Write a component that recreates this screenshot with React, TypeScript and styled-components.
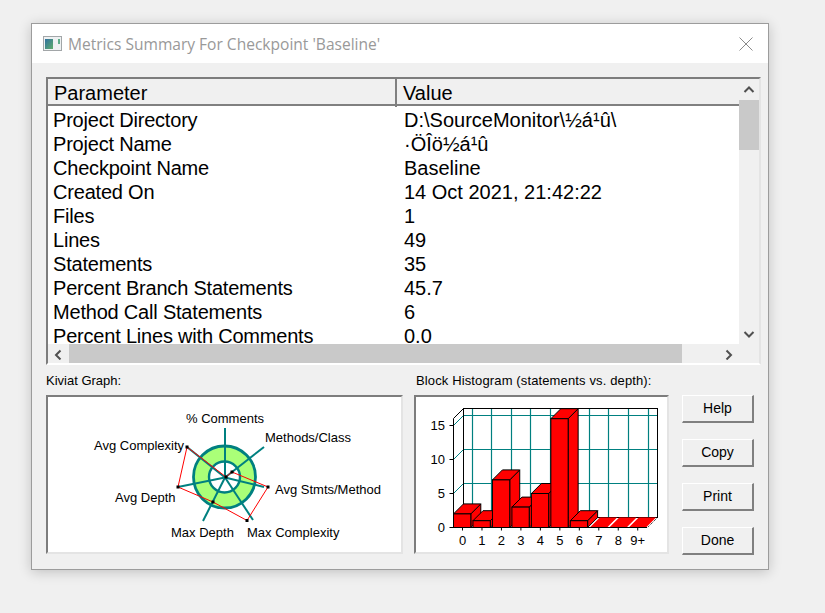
import React from "react";
import styled, { createGlobalStyle } from "styled-components";

const Global = createGlobalStyle`
  html, body { margin: 0; padding: 0; background: #f0f0f0; }
  #root { width: 825px; height: 613px; overflow: hidden; }
`;

const Page = styled.div`
  padding: 23px 0 0 31px;
  font-family: "Liberation Sans", Arial, sans-serif;
  color: #000;
`;

const Win = styled.div`
  width: 738px;
  height: 547px;
  box-sizing: border-box;
  border: 1px solid #9c9c9c;
  background: #f0f0f0;
  box-shadow: 0 2px 12px rgba(0, 0, 0, 0.2);
  display: flex;
  flex-direction: column;
`;

const TitleBar = styled.div`
  height: 39px;
  background: #fff;
  display: flex;
  align-items: center;
  padding: 0 15px 0 11px;
  gap: 6px;
`;

const TitleText = styled.div`
  flex: 1;
  font-family: "Open Sans", "Noto Sans", sans-serif;
  font-size: 15.55px;
  color: #999;
  white-space: nowrap;
`;

const Body = styled.div`
  flex: 1;
  padding: 14px 0 0 14px;
  display: flex;
  flex-direction: column;
`;

const ListBox = styled.div`
  width: 715px;
  height: 288px;
  box-sizing: border-box;
  border-top: 2px solid #7d7d7d;
  border-left: 2px solid #7d7d7d;
  border-right: 2px solid #e4e4e4;
  border-bottom: 2px solid #fff;
  background: #fff;
  display: grid;
  grid-template-columns: 1fr 20px;
  grid-template-rows: 1fr 19px;
`;

const ListMain = styled.div`
  overflow: hidden;
  min-width: 0;
`;

const HeaderRow = styled.div`
  display: grid;
  grid-template-columns: 349px 1fr;
  height: 27px;
  box-sizing: border-box;
  background: #f0f0f0;
  border-bottom: 2px solid #808080;
`;

const HeaderCell = styled.div<{ $divider?: boolean }>`
  font-size: 20px;
  line-height: 28px;
  padding-left: 6px;
  box-sizing: border-box;
  border-right: ${(p) => (p.$divider ? "2px solid #808080" : "none")};
`;

const Row = styled.div`
  display: grid;
  grid-template-columns: 348px 1fr;
  height: 24px;
  font-size: 20px;
  line-height: 24px;
  white-space: nowrap;
`;

const RowsWrap = styled.div`
  padding-top: 2px;
`;

const CellName = styled.div`
  padding-left: 5px;
  letter-spacing: -0.2px;
`;

const CellValue = styled.div`
  padding-left: 8px;
`;

const VScroll = styled.div`
  background: #f0f0f0;
  display: flex;
  flex-direction: column;
  align-items: stretch;
`;

const ScrollBtn = styled.div<{ $w?: number; $h?: number }>`
  flex: none;
  width: ${(p) => (p.$w ? `${p.$w}px` : "auto")};
  height: ${(p) => (p.$h ? `${p.$h}px` : "auto")};
  display: flex;
  align-items: center;
  justify-content: center;
`;

const VThumb = styled.div`
  height: 50px;
  background: #c9c9c9;
`;

const ScrollSpacer = styled.div`
  flex: 1;
`;

const HScroll = styled.div`
  grid-column: 1 / 3;
  background: #f0f0f0;
  display: flex;
  align-items: stretch;
`;

const HThumb = styled.div`
  width: 613px;
  background: #c9c9c9;
`;

const Lower = styled.div`
  display: grid;
  grid-template-columns: 357px 255px 72px;
  column-gap: 11px;
  margin-top: 8px;
  grid-template-rows: 22px 160px;
`;

const ChartLabel = styled.div<{ $pad?: number; $tracking?: number }>`
  font-size: 13px;
  line-height: 16px;
  padding-left: ${(p) => p.$pad ?? 0}px;
  letter-spacing: ${(p) => p.$tracking ?? 0}px;
  white-space: nowrap;
  align-self: start;
`;

const ChartBox = styled.div`
  box-sizing: border-box;
  height: 159px;
  border-top: 2px solid #7d7d7d;
  border-left: 2px solid #7d7d7d;
  border-right: 2px solid #e4e4e4;
  border-bottom: 2px solid #e4e4e4;
  background: #fff;
  overflow: hidden;
  svg { display: block; }
`;

const ButtonCol = styled.div`
  display: flex;
  flex-direction: column;
  gap: 16px;
  margin-left: 2px;
`;

const LowerCell = styled.div``;

const Btn = styled.button`
  width: 72px;
  height: 28px;
  box-sizing: border-box;
  padding: 0 0 2px;
  background: #f0f0f0;
  border-top: 1px solid #fff;
  border-left: 1px solid #fff;
  border-right: 2px solid #808080;
  border-bottom: 2px solid #808080;
  font-family: "Liberation Sans", Arial, sans-serif;
  font-size: 14px;
  color: #000;
`;

const Chevron = ({ dir }: { dir: "up" | "down" | "left" | "right" }) => {
  const d = {
    up: "M1.5 7 L6 2.5 L10.5 7",
    down: "M1.5 3 L6 7.5 L10.5 3",
    left: "M7.5 1.5 L3 6 L7.5 10.5",
    right: "M3.5 1.5 L8 6 L3.5 10.5",
  }[dir];
  return (
    <svg width="12" height="12" viewBox="0 0 12 10" fill="none">
      <path d={d} stroke="#505050" strokeWidth="2" />
    </svg>
  );
};

const rows: [string, string][] = [
  ["Project Directory", "D:\\SourceMonitor\\½á¹û\\"],
  ["Project Name", "·ÖÎö½á¹û"],
  ["Checkpoint Name", "Baseline"],
  ["Created On", "14 Oct 2021, 21:42:22"],
  ["Files", "1"],
  ["Lines", "49"],
  ["Statements", "35"],
  ["Percent Branch Statements", "45.7"],
  ["Method Call Statements", "6"],
  ["Percent Lines with Comments", "0.0"],
];

const TEAL = "#008080";
const chartFont = { fontFamily: "'Liberation Sans', Arial, sans-serif", fontSize: 13 };

const Kiviat = () => {
  const c = [225, 477.5];
  const ends = [
    [225, 428],
    [264, 447],
    [264, 487],
    [253, 520],
    [203, 521],
    [178, 487],
    [187, 447],
  ];
  const poly = [
    [226, 477],
    [232, 472],
    [268, 487],
    [247, 520.5],
    [213, 502],
    [178, 487],
    [187, 447],
  ];
  const labels: [string, number, number][] = [
    ["% Comments", 186, 423],
    ["Methods/Class", 265, 442],
    ["Avg Complexity", 94, 450],
    ["Avg Stmts/Method", 275, 494],
    ["Avg Depth", 115, 502],
    ["Max Depth", 171, 537],
    ["Max Complexity", 247, 537],
  ];
  return (
    <svg width="353" height="155" viewBox="48 397 353 155">
      <circle cx={224.5} cy={477} r={31} fill="#aaff78" stroke={TEAL} strokeWidth="2.8" />
      <circle cx={224.5} cy={477} r={15.5} fill="#fff" stroke={TEAL} strokeWidth="2.4" />
      {ends.map((e, i) => (
        <line key={i} x1={c[0]} y1={c[1]} x2={e[0]} y2={e[1]} stroke={TEAL} strokeWidth="2" />
      ))}
      <polygon points={poly.map((p) => p.join(",")).join(" ")} fill="none" stroke="#ff0000" strokeWidth="1" />
      {poly.map((p, i) => (
        <rect key={i} x={p[0] - 1.5} y={p[1] - 1.5} width="3" height="3" fill="#000" />
      ))}
      {labels.map(([t, x, y]) => (
        <text key={t} x={x} y={y} {...chartFont} fill="#000">
          {t}
        </text>
      ))}
    </svg>
  );
};

const Histogram = () => {
  const values = [2, 1, 7, 3, 5, 16, 1, 0, 0, 0];
  const x0 = 453.5;
  const base = 527.5;
  const pitch = 19.47;
  const bw = 17.3;
  const unit = 6.8;
  const dx = 10;
  const dy = 10;
  const names = ["0", "1", "2", "3", "4", "5", "6", "7", "8", "9+"];
  const vgrid = [472.5, 491.5, 511.5, 530.5, 550.5, 569.5, 589.5, 608.5, 628.5, 648.5];
  return (
    <svg width="251" height="155" viewBox="416 397 251 155">
      {[415.5, 449.5, 483.5].map((y) => (
        <line key={y} x1={463.5} y1={y} x2={657.5} y2={y} stroke={TEAL} strokeWidth="1.2" />
      ))}
      {vgrid.map((x) => (
        <line key={x} x1={x} y1={408.5} x2={x} y2={517.5} stroke={TEAL} strokeWidth="1.2" />
      ))}
      {[425.5, 459.5, 493.5].map((y) => (
        <line key={y} x1={453.5} y1={y} x2={463.5} y2={y - 10} stroke={TEAL} strokeWidth="1" />
      ))}
      <rect x={463.5} y={408.5} width={194} height={109} fill="none" stroke="#000" strokeWidth="1" />
      <line x1={453.5} y1={418.5} x2={463.5} y2={408.5} stroke="#000" />
      <line x1={453.5} y1={418.5} x2={453.5} y2={base} stroke="#000" />
      <line x1={657.5} y1={517.5} x2={647.5} y2={base} stroke="#000" strokeDasharray="1 1" />
      {values.map((v, i) => {
        const x = x0 + i * pitch;
        const r = x + bw;
        const t = base - v * unit;
        if (v === 0) {
          return (
            <polygon
              key={i}
              points={`${x},${base} ${r},${base} ${r + dx},${base - dy} ${x + dx},${base - dy}`}
              fill="#ff0000"
            />
          );
        }
        const cap = Math.max(base - v * unit - dy, 408.5);
        return (
          <g key={i} fill="#ff0000" stroke="#000" strokeWidth="1">
            <polygon points={`${r},${t} ${r + dx},${cap} ${r + dx},${base - dy} ${r},${base}`} />
            <polygon points={`${x},${t} ${x + dx},${cap} ${r + dx},${cap} ${r},${t}`} />
            <rect x={x} y={t} width={bw} height={v * unit} />
          </g>
        );
      })}
      <line x1={453.5} y1={base} x2={647} y2={base} stroke="#000" />
      {[base, base - 34, base - 68, base - 102].map((y) => (
        <line key={y} x1={449.5} y1={y} x2={453.5} y2={y} stroke="#000" />
      ))}
      {values.map((_, i) => (
        <line key={i} x1={462.5 + i * pitch} y1={base} x2={462.5 + i * pitch} y2={base + 3} stroke="#000" />
      ))}
      {[
        ["15", 430],
        ["10", 464],
        ["5", 498],
        ["0", 532],
      ].map(([t, y]) => (
        <text key={t as string} x={445} y={y as number} textAnchor="end" {...chartFont} fill="#000">
          {t}
        </text>
      ))}
      {names.map((n, i) => (
        <text key={n} x={462.5 + i * pitch} y={545} textAnchor="middle" {...chartFont} fill="#000">
          {n}
        </text>
      ))}
    </svg>
  );
};

const AppIcon = () => (
  <svg width="19" height="15" viewBox="0 0 19 15">
    <defs>
      <linearGradient id="appIconFill" x1="0" y1="0" x2="1" y2="1">
        <stop offset="0" stopColor="#2f6f9f" />
        <stop offset="1" stopColor="#5fae6a" />
      </linearGradient>
    </defs>
    <rect x="0.5" y="0.5" width="18" height="14" fill="#eef1f2" stroke="#a2a6a8" />
    <rect x="2" y="3" width="8" height="10" fill="url(#appIconFill)" />
    <rect x="15" y="3" width="2" height="5" fill="#5fae8a" />
  </svg>
);

const CloseIcon = () => (
  <svg width="14" height="14" viewBox="0 0 14 14">
    <path d="M0.5 0.5 L13.5 13.5 M13.5 0.5 L0.5 13.5" stroke="#8a8a8a" strokeWidth="1" fill="none" />
  </svg>
);

export default function App() {
  return (
    <Page>
      <Global />
      <Win>
        <TitleBar>
          <AppIcon />
          <TitleText>Metrics Summary For Checkpoint 'Baseline'</TitleText>
          <CloseIcon />
        </TitleBar>
        <Body>
          <ListBox>
            <ListMain>
              <HeaderRow>
                <HeaderCell $divider>Parameter</HeaderCell>
                <HeaderCell>Value</HeaderCell>
              </HeaderRow>
              <RowsWrap>
                {rows.map(([k, v]) => (
                  <Row key={k}>
                    <CellName>{k}</CellName>
                    <CellValue>{v}</CellValue>
                  </Row>
                ))}
              </RowsWrap>
            </ListMain>
            <VScroll>
              <ScrollBtn $h={21}>
                <Chevron dir="up" />
              </ScrollBtn>
              <VThumb />
              <ScrollSpacer />
              <ScrollBtn $h={21}>
                <Chevron dir="down" />
              </ScrollBtn>
            </VScroll>
            <HScroll>
              <ScrollBtn $w={21}>
                <Chevron dir="left" />
              </ScrollBtn>
              <HThumb />
              <ScrollSpacer />
              <ScrollBtn $w={60}>
                <Chevron dir="right" />
              </ScrollBtn>
            </HScroll>
          </ListBox>
          <Lower>
            <ChartLabel>Kiviat Graph:</ChartLabel>
            <ChartLabel $pad={2} $tracking={0.13}>
              Block Histogram (statements vs. depth):
            </ChartLabel>
            <LowerCell />
            <ChartBox>
              <Kiviat />
            </ChartBox>
            <ChartBox>
              <Histogram />
            </ChartBox>
            <ButtonCol>
              <Btn>Help</Btn>
              <Btn>Copy</Btn>
              <Btn>Print</Btn>
              <Btn>Done</Btn>
            </ButtonCol>
          </Lower>
        </Body>
      </Win>
    </Page>
  );
}
